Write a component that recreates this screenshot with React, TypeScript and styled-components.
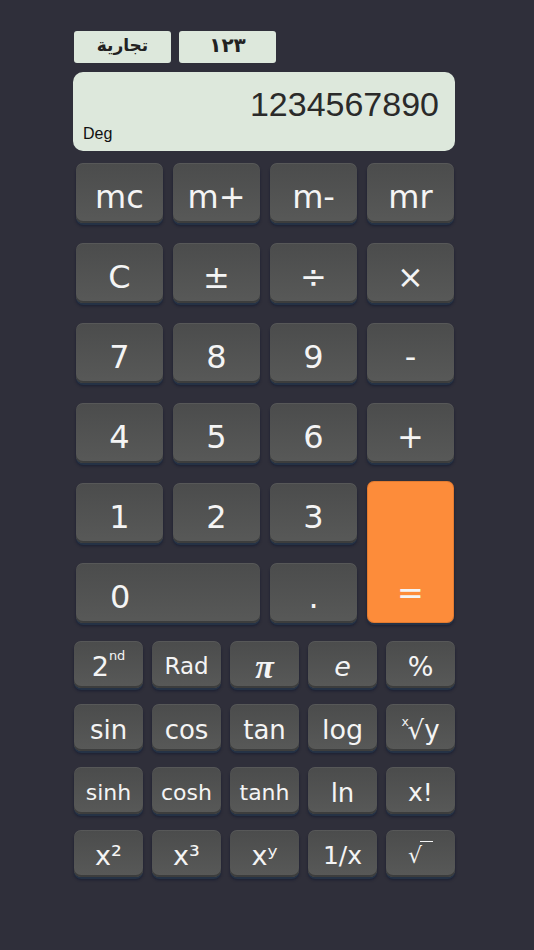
import styled, { createGlobalStyle } from 'styled-components';

const GlobalStyle = createGlobalStyle`
  html, body {
    margin: 0;
    padding: 0;
    background: #2f2f3a;
  }
  body {
    font-family: "DejaVu Sans", Verdana, sans-serif;
  }
`;

const Page = styled.div`
  width: 534px;
  height: 950px;
  background: #2f2f3a;
  display: flex;
  flex-direction: column;
  align-items: flex-start;
  padding: 31px 0 0 73px;
  box-sizing: border-box;
`;

const Tabs = styled.div`
  display: flex;
  gap: 8px;
  margin-left: 1px;
`;

const Tab = styled.div<{ $size?: number }>`
  width: 97px;
  height: 32px;
  background: #dde8dc;
  border-radius: 3px;
  display: flex;
  align-items: center;
  justify-content: center;
  font-family: "DejaVu Sans", sans-serif;
  font-weight: bold;
  font-size: ${(p) => p.$size ?? 17}px;
  color: #222;
  padding-bottom: 4px;
  box-sizing: border-box;
`;

const Display = styled.div`
  margin-top: 9px;
  width: 382px;
  height: 79px;
  background: #dde8dc;
  border-radius: 10px;
  display: flex;
  flex-direction: column;
  box-sizing: border-box;
  padding: 12px 16px 0 10px;
  font-family: "Liberation Sans", Arial, sans-serif;
  color: #2a2a2a;
`;

const Value = styled.div`
  font-size: 34px;
  text-align: right;
  line-height: 40px;
`;

const Mode = styled.div`
  font-size: 16px;
  line-height: 18px;
  margin-top: 1px;
  color: #111;
`;

const MainGrid = styled.div`
  margin-top: 12px;
  margin-left: 3px;
  display: grid;
  grid-template-columns: repeat(4, 87px);
  grid-auto-rows: 60px;
  column-gap: 10px;
  row-gap: 20px;
`;

const Key = styled.button<{ $size?: number; $span?: string; $rows?: number }>`
  all: unset;
  box-sizing: border-box;
  display: flex;
  align-items: center;
  justify-content: center;
  padding-top: 7px;
  border-radius: 7px;
  background: linear-gradient(#4b4c4c, #585958);
  box-shadow:
    inset 0 1px 0 rgba(255, 255, 255, 0.07),
    inset 0 -2px 0 #3c3d3d,
    0 2px 0 #253245,
    0 3px 3px rgba(0, 10, 40, 0.45);
  color: #f4f4f4;
  font-family: "DejaVu Sans", Verdana, sans-serif;
  font-size: ${(p) => p.$size ?? 32}px;
  line-height: 1;
  grid-column: ${(p) => p.$span ?? 'auto'};
  grid-row: ${(p) => (p.$rows ? `span ${p.$rows}` : 'auto')};
`;

const ZeroKey = styled(Key)`
  justify-content: flex-start;
  padding-left: 34px;
`;

const EqualKey = styled(Key)`
  background: #fd8c3a;
  align-items: flex-end;
  padding-bottom: 14px;
  margin-top: -2px;
  box-shadow:
    inset 0 0 0 1px rgba(150, 70, 20, 0.25),
    0 2px 0 #253245,
    0 3px 3px rgba(0, 10, 40, 0.45);
`;

const SciGrid = styled.div`
  margin-top: 18px;
  margin-left: 1px;
  display: grid;
  grid-template-columns: repeat(5, 69px);
  grid-auto-rows: 47px;
  column-gap: 9px;
  row-gap: 16px;
`;

const SciKey = styled(Key)`
  padding-top: 4px;
`;

const Sup = styled.sup`
  font-size: 0.48em;
  vertical-align: 0;
  position: relative;
  top: -0.75em;
`;

const RootIndex = styled.span`
  font-size: 0.48em;
  position: relative;
  top: -0.55em;
  margin-right: -0.1em;
`;

const Overbar = styled.span`
  display: inline-block;
  width: 13px;
  height: 22px;
  border-top: 1.5px solid #f4f4f4;
  margin-left: -2px;
  transform: translateY(-3px);
`;

const Pi = styled.span`
  font-family: "Liberation Serif", "Times New Roman", serif;
  font-weight: bold;
  font-style: italic;
`;

const Em = styled.span`
  font-style: italic;
`;

export default function App() {
  return (
    <Page>
      <GlobalStyle />
      <Tabs>
        <Tab>تجارية</Tab>
        <Tab $size={20}>١٢٣</Tab>
      </Tabs>
      <Display>
        <Value>1234567890</Value>
        <Mode>Deg</Mode>
      </Display>
      <MainGrid>
        <Key>mc</Key>
        <Key>m+</Key>
        <Key>m-</Key>
        <Key>mr</Key>
        <Key>C</Key>
        <Key>±</Key>
        <Key>÷</Key>
        <Key>×</Key>
        <Key>7</Key>
        <Key>8</Key>
        <Key>9</Key>
        <Key>-</Key>
        <Key>4</Key>
        <Key>5</Key>
        <Key>6</Key>
        <Key>+</Key>
        <Key>1</Key>
        <Key>2</Key>
        <Key>3</Key>
        <EqualKey $rows={2}>=</EqualKey>
        <ZeroKey $span="span 2">0</ZeroKey>
        <Key>.</Key>
      </MainGrid>
      <SciGrid>
        <SciKey $size={27}>
          2<Sup>nd</Sup>
        </SciKey>
        <SciKey $size={23}>Rad</SciKey>
        <SciKey $size={34}>
          <Pi>π</Pi>
        </SciKey>
        <SciKey $size={27}>
          <Em>e</Em>
        </SciKey>
        <SciKey $size={27}>%</SciKey>
        <SciKey $size={26}>sin</SciKey>
        <SciKey $size={26}>cos</SciKey>
        <SciKey $size={26}>tan</SciKey>
        <SciKey $size={27}>log</SciKey>
        <SciKey $size={26}>
          <RootIndex>x</RootIndex>√y
        </SciKey>
        <SciKey $size={22}>sinh</SciKey>
        <SciKey $size={22}>cosh</SciKey>
        <SciKey $size={22}>tanh</SciKey>
        <SciKey $size={26}>ln</SciKey>
        <SciKey $size={25}>x!</SciKey>
        <SciKey $size={27}>x²</SciKey>
        <SciKey $size={27}>x³</SciKey>
        <SciKey $size={27}>xʸ</SciKey>
        <SciKey $size={25}>1/x</SciKey>
        <SciKey $size={22}>
          √<Overbar />
        </SciKey>
      </SciGrid>
    </Page>
  );
}
